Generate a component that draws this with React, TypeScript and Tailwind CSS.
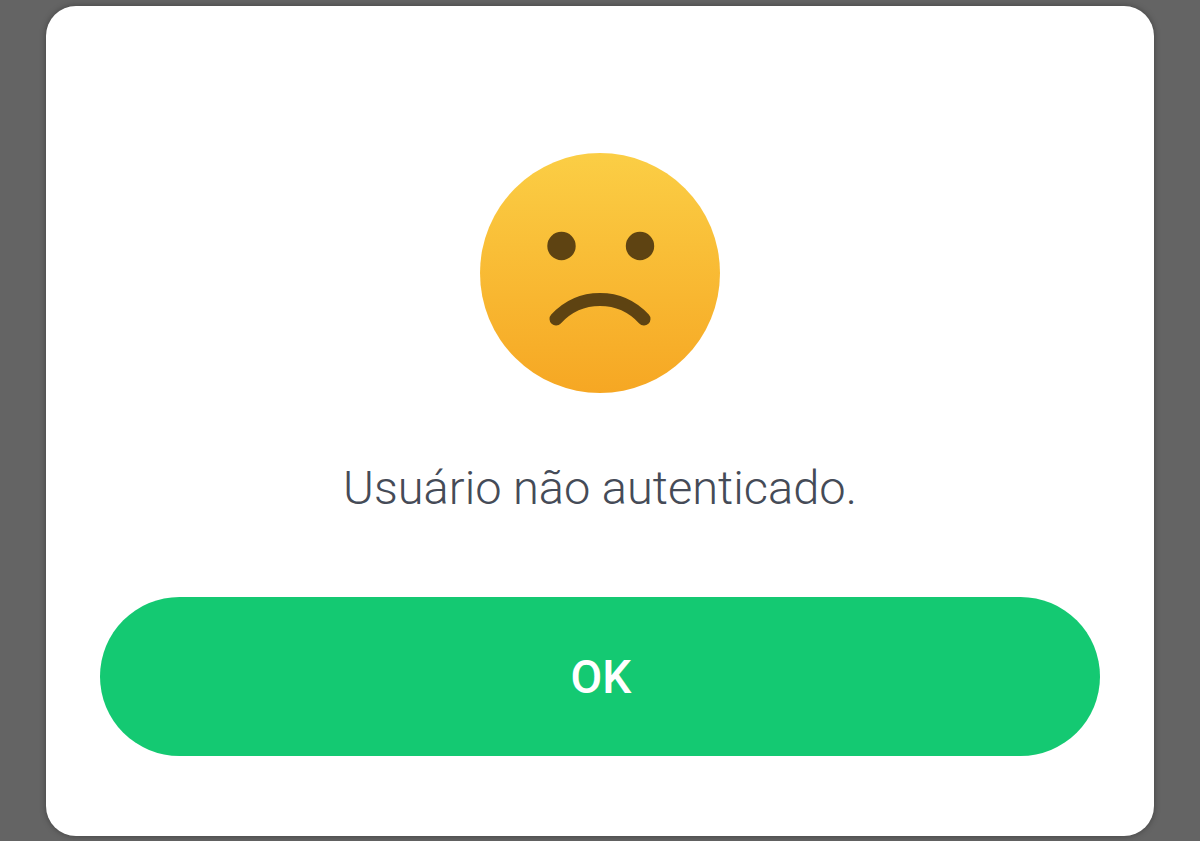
export default function App() {
  return (
    <div className="h-[841px] overflow-hidden bg-[#646464] pt-[6px] pl-[46px] pr-[46px] font-['Roboto',sans-serif]">
      <div className="h-[830px] rounded-[30px] bg-white px-[54px] pt-[147px] flex flex-col items-center shadow-[0_0_6px_rgba(0,0,0,0.35)]">
        <svg width="240" height="240" viewBox="0 0 240 240" className="shrink-0">
          <defs>
            <linearGradient id="face" x1="0" y1="0" x2="0" y2="1">
              <stop offset="0" stopColor="#fbce45" />
              <stop offset="1" stopColor="#f6a723" />
            </linearGradient>
          </defs>
          <circle cx="120" cy="120" r="120" fill="url(#face)" />
          <circle cx="81.5" cy="93" r="14.2" fill="#5e4312" />
          <circle cx="160" cy="93" r="14.2" fill="#5e4312" />
          <path d="M76 166 C 100 140, 140 140, 164 166" fill="none" stroke="#5e4312" strokeWidth="13" strokeLinecap="round" />
        </svg>
        <p className="mt-[68px] h-[54px] text-[47px] leading-[54px] font-light text-[#454b57] whitespace-nowrap">
          Usuário não autenticado.
        </p>
        <button className="mt-[82px] h-[159px] w-full shrink-0 rounded-full bg-[#14c972] pt-[2px] pl-[2px] text-[46px] font-medium text-white">
          OK
        </button>
      </div>
    </div>
  );
}
